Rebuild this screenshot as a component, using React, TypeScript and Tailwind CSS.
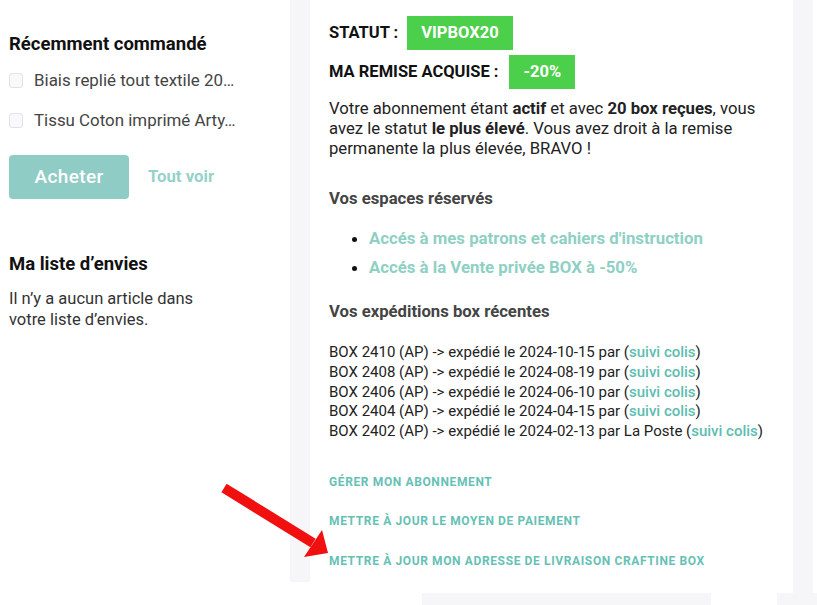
import React from 'react';

const font = { fontFamily: 'Roboto, "Noto Sans", Arial, sans-serif' };

const shipments = [
  { box: '2410', date: '2024-10-15', by: '' },
  { box: '2408', date: '2024-08-19', by: '' },
  { box: '2406', date: '2024-06-10', by: '' },
  { box: '2404', date: '2024-04-15', by: '' },
  { box: '2402', date: '2024-02-13', by: 'La Poste ' },
];

function Sidebar() {
  return (
    <aside className="w-[290px] shrink-0 bg-white pl-[9px] pt-[33px]">
      <h3 className="text-[18.5px] font-bold leading-[22px] text-[#111]">Récemment commandé</h3>
      <ul className="mt-[15px] flex flex-col gap-[19px]">
        {['Biais replié tout textile 20…', 'Tissu Coton imprimé Arty…'].map((t) => (
          <li key={t} className="flex items-center gap-[11px] text-[16.9px] leading-[21px] text-[#444]">
            <span className="h-[15px] w-[14px] rounded-[3px] border border-[#e2e2e6] bg-[#f9f9fb]" />
            <span>{t}</span>
          </li>
        ))}
      </ul>
      <div className="mt-[24px] flex items-center gap-[19px]">
        <button type="button" className="h-[44px] w-[120px] rounded-[4px] bg-[#8fccc5] text-[19px] font-medium tracking-[0.02em] text-white">
          Acheter
        </button>
        <a className="text-[16.8px] font-bold text-[#96d2c9]">Tout voir</a>
      </div>

      <h3 className="mt-[54px] text-[18.5px] font-bold leading-[22px] text-[#111]">Ma liste d’envies</h3>
      <p className="mt-[13px] w-[205px] text-[16.5px] leading-[21px] text-[#333]">
        Il n’y a aucun article dans votre liste d’envies.
      </p>
    </aside>
  );
}

function Badge({ children }: { children: React.ReactNode }) {
  return (
    <span className="inline-flex h-[34px] items-center bg-[#4ccf4a] px-[14px] text-[16.5px] font-bold text-white">
      {children}
    </span>
  );
}

function AccountCard() {
  return (
    <section className="h-[593px] w-[483px] shrink-0 bg-white pl-[19px] pt-[16px]">
      <div className="flex items-center gap-[9px]">
        <span className="text-[16.5px] font-bold text-[#111]">STATUT :</span>
        <Badge>VIPBOX20</Badge>
      </div>
      <div className="mt-[5px] flex items-center gap-[11px]">
        <span className="text-[16.5px] font-bold text-[#111]">MA REMISE ACQUISE :</span>
        <Badge>-20%</Badge>
      </div>
      <p className="mt-[10px] w-[440px] text-[16.7px] leading-[20px] text-[#222]">
        Votre abonnement étant <b>actif</b> et avec <b>20 box reçues</b>, vous avez le statut{' '}
        <b>le plus élevé</b>. Vous avez droit à la remise permanente la plus élevée, BRAVO !
      </p>

      <h4 className="mt-[30px] text-[16.7px] font-bold leading-[20px] text-[#444]">Vos espaces réservés</h4>
      <ul className="mt-[19px] flex list-disc flex-col gap-[9px] pl-[40px] text-[16.8px] font-bold leading-[20px] text-[#8fd0c4] marker:text-[#111]">
        <li>Accés à mes patrons et cahiers d'instruction</li>
        <li>Accés à la Vente privée BOX à -50%</li>
      </ul>

      <h4 className="mt-[25px] text-[16.7px] font-bold leading-[20px] text-[#444]">Vos expéditions box récentes</h4>
      <div className="mt-[21px] text-[15px] leading-[19.75px] text-[#222]">
        {shipments.map((s) => (
          <div key={s.box}>
            BOX {s.box} (AP) -&gt; expédié le {s.date} par {s.by}(
            <span className="font-medium text-[#5dbdaf]">suivi colis</span>)
          </div>
        ))}
      </div>

      <div className="mt-[33px] flex flex-col gap-[25.5px] text-[12px] font-bold uppercase leading-[14px] tracking-[0.052em] text-[#66c1b5]">
        <a>Gérer mon abonnement</a>
        <a>Mettre à jour le moyen de paiement</a>
        <a>Mettre à jour mon adresse de livraison Craftine Box</a>
      </div>
    </section>
  );
}

function Arrow() {
  return (
    <svg className="pointer-events-none absolute left-0 top-0" width="817" height="605" viewBox="0 0 817 605">
      <polygon points="221.4,492.3 226.6,483.7 315.6,538.7 310.4,547.3" fill="#f01010" />
      <polygon points="322,530 328,553 304,557" fill="#f01010" />
    </svg>
  );
}

export default function App() {
  return (
    <div className="relative h-[605px] w-[817px] overflow-hidden bg-white" style={font}>
      <div className="flex items-start">
        <Sidebar />
        <div className="h-[582px] w-[20px] shrink-0 bg-[#f6f6f8]" />
        <AccountCard />
        <div className="h-[593px] w-[20px] shrink-0 bg-[#f6f6f8]" />
      </div>
      <div className="flex h-[12px]">
        <div className="ml-[422px] h-full w-[289px] bg-[#f6f6f8]" />
        <div className="ml-[66px] h-full flex-1 bg-[#f6f6f8]" />
      </div>
      <Arrow />
    </div>
  );
}
